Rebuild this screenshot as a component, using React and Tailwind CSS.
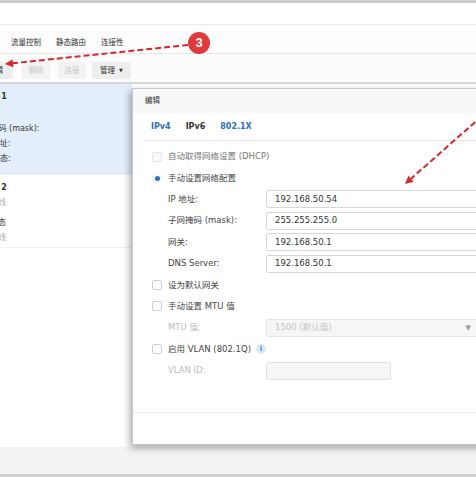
import React from 'react';

const FONT = "font-['DejaVu_Sans','Noto_Sans_CJK_SC',sans-serif]";

function Check({ disabled }) {
  return (
    <span className={`inline-block w-[10px] h-[10px] rounded-[2px] border ${disabled ? 'border-[#e6e6e6] bg-[#fafafa]' : 'border-[#cfcfcf] bg-white'}`} />
  );
}

function CheckRow({ label, disabled, children }) {
  return (
    <div className="h-[21.4px] flex items-center pl-[19px] gap-[6px]">
      <Check disabled={disabled} />
      <span className={disabled ? 'text-[#777]' : 'text-[#444]'}>{label}</span>
      {children}
    </div>
  );
}

function FieldRow({ label, value, disabled, short, select }) {
  return (
    <div className="h-[21.4px] flex items-center pl-[35px]">
      <span className={`w-[98px] shrink-0 ${disabled ? 'text-[#bdbdbd]' : 'text-[#444]'}`}>{label}</span>
      <div
        className={`h-[18px] flex items-center px-[8px] border rounded-[2px] ${short ? 'w-[125px]' : 'w-[216px]'} ${
          disabled ? 'bg-[#f6f6f6] border-[#e3e3e3] text-[#c4c4c4]' : 'bg-white border-[#d8d8d8] text-[#333]'
        }`}
      >
        <span className="flex-1">{value}</span>
        {select && <span className="text-[#999] text-[7px] mr-[2px]">▼</span>}
      </div>
    </div>
  );
}

// list lines are clipped by the page's left edge, as in the screenshot
function ListLine({ text, offset, className = '' }) {
  return (
    <div className={`h-[15px] leading-[15px] whitespace-nowrap ${className}`} style={{ marginLeft: offset }}>
      {text}
    </div>
  );
}

export default function App() {
  return (
    <div className={`relative w-[476px] h-[477px] overflow-hidden bg-white text-[8.5px] ${FONT}`}>
      {/* window chrome */}
      <div className="h-[3px] bg-[#cbcbcb]" />
      <div className="h-[22px] bg-white border-b border-[#ececec]" />
      <div className="h-[29px] bg-[#fdfdfd] border-b border-[#e6e6e6] flex items-center pl-[11px] gap-[15px] text-[7.5px] text-[#333] pt-[7px]">
        <span>流量控制</span>
        <span>静态路由</span>
        <span>连接性</span>
      </div>
      <div className="h-[30px] bg-[#fcfcfc] border-b-2 border-[#d6d6d6] flex items-start pt-[8px] text-[7.5px]">
        <div className="ml-[-19px] w-[32px] h-[17px] rounded-[2px] bg-[#eeeeee] flex items-center pl-[7px] text-[#333]">编辑</div>
        <div className="ml-[9px] w-[28px] h-[17px] rounded-[2px] bg-[#f3f3f3] flex items-center justify-center text-[#c8c8c8]">删除</div>
        <div className="ml-[8px] w-[28px] h-[17px] rounded-[2px] bg-[#f3f3f3] flex items-center justify-center text-[#c8c8c8]">连接</div>
        <div className="ml-[6px] w-[39px] h-[17px] rounded-[2px] bg-[#eeeeee] flex items-center justify-center gap-[4px] text-[#333]">
          <span>管理</span>
          <span className="text-[5px]">▼</span>
        </div>
      </div>

      {/* interface list */}
      <div className="h-[363px] flex">
        <div className="w-[132px] flex flex-col text-[8px] text-[#333]">
          <div className="h-[91px] bg-[#e4eefa] pt-[5px]">
            <ListLine text="局域网 1" offset="-25.5px" className="font-bold" />
            <div className="h-[17px]" />
            <ListLine text="子网掩码 (mask):" offset="-25.5px" />
            <ListLine text="IP 地址:" offset="-18px" />
            <ListLine text="状态:" offset="-8px" />
          </div>
          <div className="h-[73px] border-b border-[#f0f0f0] pt-[5px]">
            <ListLine text="局域网 2" offset="-25.5px" className="font-bold" />
            <ListLine text="已断线" offset="-18px" className="text-[#aaa]" />
            <div className="h-[5px]" />
            <ListLine text="状态" offset="-10px" />
            <ListLine text="已断线" offset="-18px" className="text-[#aaa]" />
          </div>
          <div className="flex-1" />
        </div>
        <div className="flex-1 bg-white" />
      </div>
      <div className="h-[27px] bg-[#f3f3f3]" />
      <div className="h-[3px] bg-[#cfcfcf]" />

      {/* edit dialog */}
      <div className="absolute left-[132px] top-[88px] w-[370px] h-[357px] bg-white border border-[#c8c8c8] shadow-[-2px_3px_7px_rgba(0,0,0,0.35)] flex flex-col">
        <div className="h-[24px] bg-[#f8f8f8] flex items-center pl-[12px] text-[7.5px] text-[#333]">编辑</div>
        <div className="h-[28px] mx-[12px] border-b border-[#e4e4e4] flex items-center pl-[6px] gap-[15px] font-bold text-[8px]">
          <span className="text-[#2d6fb8]">IPv4</span>
          <span className="text-[#333]">IPv6</span>
          <span className="text-[#2d6fb8]">802.1X</span>
        </div>
        <div className="pt-[5px]">
          <CheckRow label="自动取得网络设置 (DHCP)" disabled />
          <div className="h-[21.4px] flex items-center pl-[19px] gap-[6px]">
            <span className="w-[10px] h-[10px] rounded-full border border-[#eeeeee] flex items-center justify-center">
              <span className="w-[5px] h-[5px] rounded-full bg-[#2a72c4]" />
            </span>
            <span className="text-[#444]">手动设置网络配置</span>
          </div>
          <FieldRow label="IP 地址:" value="192.168.50.54" />
          <FieldRow label="子网掩码 (mask):" value="255.255.255.0" />
          <FieldRow label="网关:" value="192.168.50.1" />
          <FieldRow label="DNS Server:" value="192.168.50.1" />
          <CheckRow label="设为默认网关" />
          <CheckRow label="手动设置 MTU 值" />
          <FieldRow label="MTU 值:" value="1500 (默认值)" disabled select />
          <CheckRow label="启用 VLAN (802.1Q)">
            <span className="ml-[-1px] w-[10px] h-[10px] rounded-full bg-[#dbe8f6] flex items-center justify-center text-[#3b7cc7] text-[7px] font-bold">i</span>
          </CheckRow>
          <FieldRow label="VLAN ID:" value="" disabled short />
        </div>
        <div className="flex-1" />
        <div className="h-[32px] border-t border-[#f0f0f0]" />
      </div>

      {/* step badge */}
      <div className="absolute left-[188px] top-[32px] w-[22px] h-[22px] rounded-full bg-[#e2393d] flex items-center justify-center text-white font-bold text-[13px] font-['Liberation_Sans',sans-serif]">
        3
      </div>

      {/* annotation arrows */}
      <svg className="absolute inset-0 pointer-events-none" width="476" height="477" viewBox="0 0 476 477">
        <line x1="188" y1="45" x2="13" y2="63.2" stroke="#d8262c" strokeWidth="2" strokeDasharray="6 3" />
        <polygon points="5,64 13.4,67.2 12.6,59.2" fill="#d8262c" />
        <line x1="482" y1="116" x2="411" y2="178.7" stroke="#d8262c" strokeWidth="2" strokeDasharray="6 3" />
        <polygon points="405,184 413.6,181.7 408.4,175.7" fill="#d8262c" />
      </svg>
    </div>
  );
}
